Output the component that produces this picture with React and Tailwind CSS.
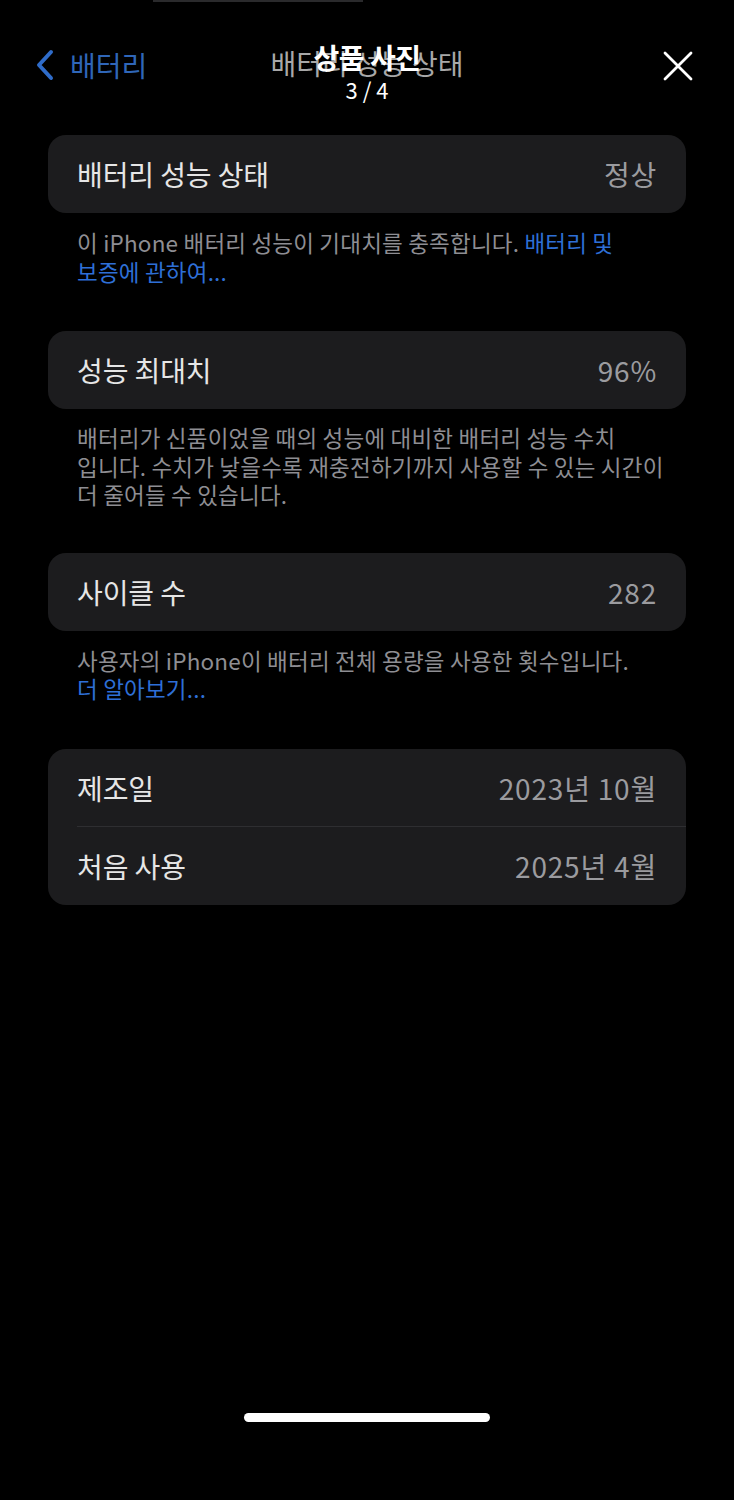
import React from 'react';

const font = { fontFamily: '"Noto Sans CJK KR", "Noto Sans", sans-serif' };

const Row = ({ label, value, divider }) => (
    <div className="relative flex items-center justify-between h-[78px] pl-[29px] pr-[29px]">
        <span className="text-[28px] tracking-[-0.1px] text-[#e6e6e6]">{label}</span>
        <span className="text-[28px] tracking-[0.8px] text-[#9b9b9f]">{value}</span>
        {divider && <div className="absolute bottom-0 left-[29px] right-0 h-px bg-[#2e2e31]"></div>}
    </div>
);

const Card = ({ children }) => (
    <div className="mx-[48px] rounded-[18px] bg-[#1c1c1e] overflow-hidden">{children}</div>
);

const Caption = ({ children, className = '' }) => (
    <div className={`px-[77px] text-[22.5px] leading-[28.5px] tracking-[0.2px] text-[#8e8e93] whitespace-nowrap ${className}`}>
        {children}
    </div>
);

export default function App() {
    return (
        <div className="w-[734px] h-[1500px] bg-black overflow-hidden relative" style={font}>
            {/* top faint line */}
            <div className="absolute top-0 left-[153px] w-[210px] h-[2px] bg-[#2a2a2c]"></div>

            {/* Header */}
            <div className="relative h-[120px]">
                <div className="absolute left-[34px] top-[48px] flex items-center gap-[14px]">
                    <svg width="22" height="32" viewBox="0 0 22 32" fill="none">
                        <path d="M17 3 L5 16 L17 29" stroke="#2f6cc9" strokeWidth="4" strokeLinecap="round" strokeLinejoin="round" />
                    </svg>
                    <span className="text-[28px] leading-[34px] text-[#2f66b8]">배터리</span>
                </div>
                <div className="absolute left-0 right-0 top-[44px] flex justify-center">
                    <span className="text-[28px] leading-[38px] text-[#a8a8a8]">배터리 성능 상태</span>
                </div>
                <div className="absolute left-0 right-0 top-[40px] flex flex-col items-center">
                    <span className="text-[28px] leading-[34px] font-bold tracking-[-0.5px] text-white">상품 사진</span>
                    <span className="text-[22px] leading-[26px] text-white mt-[2px]">3 / 4</span>
                </div>
                <div className="absolute right-[41px] top-[51px]">
                    <svg width="30" height="30" viewBox="0 0 30 30" fill="none">
                        <path d="M2 2 L28 28 M28 2 L2 28" stroke="#ffffff" strokeWidth="2.8" strokeLinecap="round" />
                    </svg>
                </div>
            </div>

            <div className="pt-[15px]">
                <Card>
                    <Row label="배터리 성능 상태" value="정상" />
                </Card>
                <Caption className="pt-[15px]">
                    <div>이 iPhone 배터리 성능이 기대치를 충족합니다. <span className="text-[#2e6fd6]">배터리 및</span></div>
                    <div className="text-[#2e6fd6]">보증에 관하여...</div>
                </Caption>

                <div className="h-[46px]"></div>
                <Card>
                    <Row label="성능 최대치" value="96%" />
                </Card>
                <Caption className="pt-[14px]">
                    <div>배터리가 신품이었을 때의 성능에 대비한 배터리 성능 수치</div>
                    <div>입니다. 수치가 낮을수록 재충전하기까지 사용할 수 있는 시간이</div>
                    <div>더 줄어들 수 있습니다.</div>
                </Caption>

                <div className="h-[44px]"></div>
                <Card>
                    <Row label="사이클 수" value="282" />
                </Card>
                <Caption className="pt-[15px]">
                    <div>사용자의 iPhone이 배터리 전체 용량을 사용한 횟수입니다.</div>
                    <div className="text-[#2e6fd6]">더 알아보기...</div>
                </Caption>

                <div className="h-[46px]"></div>
                <Card>
                    <Row label="제조일" value="2023년 10월" divider />
                    <Row label="처음 사용" value="2025년 4월" />
                </Card>
            </div>

            {/* Home indicator */}
            <div className="absolute top-[1413px] left-[244px] w-[246px] h-[9px] rounded-full bg-white"></div>
        </div>
    );
}
